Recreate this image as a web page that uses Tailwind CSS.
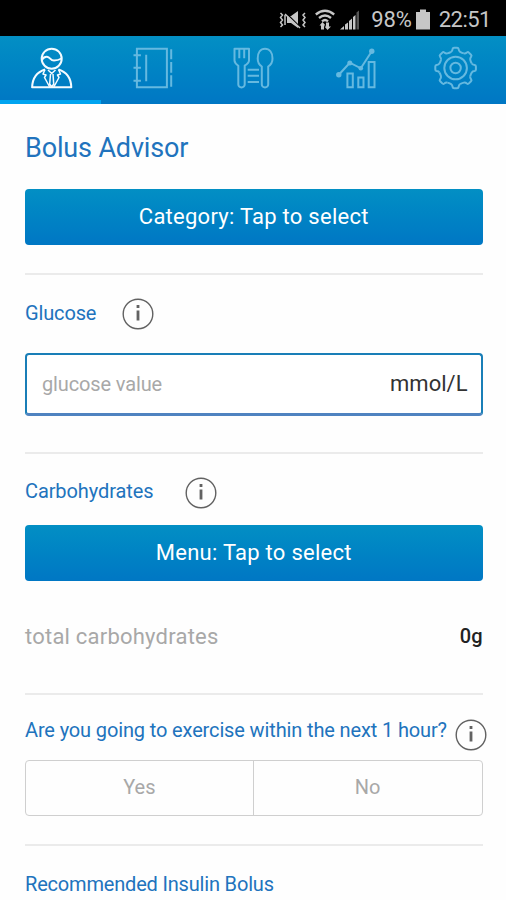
<!DOCTYPE html>
<html lang="en">
<head>
<meta charset="utf-8">
<title>Bolus Advisor</title>
<script src="https://cdn.jsdelivr.net/npm/@tailwindcss/browser@4"></script>
</head>
<body class="w-[506px] h-[900px] overflow-hidden bg-[#fefefe] font-[Roboto,sans-serif] text-[20px]">
<div class="flex h-9 items-center justify-end bg-black pr-[15px] pt-[3px] text-[22px] leading-none text-[#c6c6c6]">
  <svg class="mr-[8px] h-[21px] w-[28px]" viewBox="0 0 28 21" fill="none" stroke="#c6c6c6" stroke-width="1.5">
    <path d="M1.500 4l2 2-2 2.500 2 2.500-2 2.500 2 2.500-2 2M6 6v10M26 4l-2 2 2 2.500-2 2.500 2 2.500-2 2.500 2 2"/>
    <path d="M8 7h4l7-5v17l-7-5H8z" fill="#c6c6c6" stroke="none"/>
    <path d="M7 4l14 14" stroke="#000" stroke-width="1.500"/><path d="M6 5l15 14"/>
  </svg>
  <svg class="mr-[5px] h-[21px] w-[20px]" viewBox="0 0 20 21" fill="none" stroke="#c6c6c6" stroke-width="2.300">
    <path d="M.8 5.500Q10-2 19.200 5.500M4 9Q10 4 16 9M7 12.300Q10 9.800 13 12.300"/>
    <path d="M7.500 13l3 3.500h-1.500V20.500H6v-4H4.500zM12.500 21l-3-3.500h1.500v-4h3v4H16z" fill="#c6c6c6" stroke="none"/>
  </svg>
  <svg class="mr-[11px] h-[21px] w-[20px]" viewBox="0 0 20 21">
    <path d="M0 20.500l4-3.500v3.500zM5 20.500v-5l3-2v7zM9 20.500V12l3-2.500v11zM13 20.500V8l2.500-2v14.500z" fill="#c6c6c6"/><path d="M16.500 20.500V3.500l2.500-2v19z" fill="#555"/>
  </svg>
  <span class="tracking-[-0.1px]">98%</span>
  <svg class="ml-[4px] mr-[9px] h-[21px] w-[14px]" viewBox="0 0 14 21"><path d="M4 .5h6v2.500h4v17.500H0V3h4z" fill="#c6c6c6"/></svg>
  <span class="tracking-[-0.5px]">22:51</span>
</div>

<nav class="grid h-[68px] grid-cols-5 bg-linear-to-b from-[#038fc4] to-[#0077c4]">
  <div class="flex justify-center border-b-4 border-[#00a4f0] pt-[10px]">
    <svg class="size-11 overflow-visible" viewBox="0 0 44 44" fill="none" stroke="#f4fbff" stroke-width="2" stroke-linejoin="round">
      <circle cx="22.700" cy="12.700" r="10"/>
      <path d="M13 13.700Q15 10.500 18 10.700C21.500 11 21 14.500 25 14.500Q29 14.500 32.500 12.500"/>
      <path d="M16 23.500C8 26 3.500 32 3.100 41.300H42.300C42 32 37.500 26 29.500 23.500"/>
      <path d="M16 23.500L14 28l3 1-1.500 2.500L20.700 41M29.500 23.500l2 4.500-3 1 1.500 2.500L24.800 41M19 24l3.700 3.500L26.500 24M21.500 28L20.700 38l2 3 2-3L24 28" stroke-width="1.500"/>
    </svg>
  </div>
  <div class="flex justify-center pt-[10px]">
    <svg class="size-11 overflow-visible" viewBox="0 0 44 44" fill="none" stroke="#65b9e0" stroke-width="2">
      <path d="M6.900 2.700H36.900V41.300H6.900zM16.200 8.700V35.300M3.500 9.300h7.400M3.500 21.700h7.400M3.500 34.700h7.400M41.200 3.300v10M41.200 16v10.700M41.200 29.300v11.400"/>
    </svg>
  </div>
  <div class="flex justify-center pt-[10px]">
    <svg class="size-11 overflow-visible" viewBox="0 0 44 44" fill="none" stroke="#65b9e0" stroke-width="2" stroke-linejoin="round">
      <path d="M3.500 2.700H18V14.500Q18 17 13.700 19.700V38.500a3.200 3 0 0 1-6.400 0V19.700Q3.500 17 3.500 14.500zM8.300 2.700v9.500M13.200 2.700v9.500"/>
      <path d="M30.800 20.500C27.500 18.500 26.700 15.500 26.700 12.500C26.700 6.500 29.500 2.700 34 2.700S41.500 6.500 41.500 12.500C41.500 15.500 40.500 18.500 37.200 20.500V38.500a3.200 3 0 0 1-6.400 0zM16.700 23.700H28M16.700 29.700H28M16.700 36H28"/>
    </svg>
  </div>
  <div class="flex justify-center pt-[10px]">
    <svg class="size-11 overflow-visible" viewBox="0 0 44 44" fill="none" stroke="#65b9e0" stroke-width="2">
      <path d="M6.800 28.700l11-12 11 5.600 11-17M15.400 27.500h5.400v13.800h-5.400zM26.300 31.500h5.200v9.800h-5.200zM36.700 16h5.800v25.300h-5.800z"/>
      <g fill="#65b9e0" stroke="none"><circle cx="6.800" cy="28.700" r="2.700"/><circle cx="17.800" cy="16.900" r="2.500"/><circle cx="28.800" cy="22.300" r="2.300"/><circle cx="39.800" cy="5.300" r="2.700"/></g>
    </svg>
  </div>
  <div class="flex justify-center pt-[10px]">
    <svg class="size-11 overflow-visible" viewBox="0 0 44 44" fill="none" stroke="#65b9e0" stroke-width="2" stroke-linejoin="round">
      <g transform="translate(22.600 22)">
        <path id="tooth" d="M-4.500-16.200Q-3.200-17-3-19Q-2.800-20.300-1.500-20.300H1.500Q2.800-20.300 3-19Q3.200-17 4.500-16.200Q6.500-15 8.270-14.640"/>
        <use href="#tooth" transform="rotate(45)"/><use href="#tooth" transform="rotate(90)"/><use href="#tooth" transform="rotate(135)"/><use href="#tooth" transform="rotate(180)"/><use href="#tooth" transform="rotate(225)"/><use href="#tooth" transform="rotate(270)"/><use href="#tooth" transform="rotate(315)"/>
        <circle r="11.300"/><circle r="5.200"/>
      </g>
    </svg>
  </div>
</nav>

<main class="pl-[25px] pr-[23.500px]">
  <section class="h-[171px] border-b-2 border-[#ebebeb] pt-[26px]">
    <h1 class="h-[59px] text-[27px] leading-[36px] tracking-[-0.15px] text-[#2173bd]">Bolus Advisor</h1>
    <button class="flex h-[56px] w-full items-center justify-center rounded-[4px] bg-linear-to-b from-[#038fc4] to-[#0077c4] pb-[2px] text-[22px] tracking-[0.26px] text-white">Category: Tap to select</button>
  </section>

  <section class="h-[179px] border-b-2 border-[#ebebeb] pt-[22px]">
    <div class="flex h-[56px] gap-[26px] text-[#2173bd]">
      <span class="leading-[32px] tracking-[-0.14px]">Glucose</span>
      <svg class="size-8 mt-px" viewBox="0 0 32 32" fill="none" stroke="#626262" stroke-width="1.400"><circle cx="16" cy="16" r="14.800"/><path d="M16 7v3M16 12.500v10" stroke-width="2.800"/></svg>
    </div>
    <div class="flex h-[63px] items-center justify-between rounded-[4px] border-2 border-b-[3px] border-x-[#197eb7] border-t-[#197eb7] border-b-[#4f83c0] bg-white pl-[15px] pr-[13px]">
      <span class="tracking-[-0.14px] text-[#a8a8a8]">glucose value</span>
      <span class="pb-[2px] text-[22px] text-[#333]">mmol/L</span>
    </div>
  </section>

  <section class="h-[241px] border-b-2 border-[#ebebeb] pt-[21px]">
    <div class="flex h-[50px] gap-[32px] text-[#2173bd]">
      <span class="leading-[32px] tracking-[-0.1px]">Carbohydrates</span>
      <svg class="size-8 mt-[1.500px]" viewBox="0 0 32 32" fill="none" stroke="#626262" stroke-width="1.400"><circle cx="16" cy="16" r="14.800"/><path d="M16 7v3M16 12.500v10" stroke-width="2.800"/></svg>
    </div>
    <button class="flex h-[56px] w-full items-center justify-center rounded-[4px] bg-linear-to-b from-[#038fc4] to-[#0077c4] pb-[2px] text-[22px] tracking-[0.26px] text-white">Menu: Tap to select</button>
    <div class="mt-[39px] flex h-8 items-center justify-between">
      <span class="text-[22px] tracking-[0.22px] text-[#a8a8a8]">total carbohydrates</span>
      <span class="font-medium text-[#222]">0g</span>
    </div>
  </section>

  <section class="h-[151px] border-b-2 border-[#ebebeb] pt-[19px]">
    <div class="-mr-[4px] flex h-[46px] justify-between text-[#2173bd]">
      <span class="whitespace-nowrap leading-[32px] tracking-[-0.135px]">Are you going to exercise within the next 1 hour?</span>
      <svg class="size-8 mt-[4.500px] shrink-0" viewBox="0 0 32 32" fill="none" stroke="#626262" stroke-width="1.400"><circle cx="16" cy="16" r="14.800"/><path d="M16 7v3M16 12.500v10" stroke-width="2.800"/></svg>
    </div>
    <div class="grid h-[56px] grid-cols-2 divide-x divide-[#cfcfcf] rounded-[4px] border-[1.500px] border-[#cfcfcf] text-[#a8a8a8]">
      <button class="pb-[3px]">Yes</button>
      <button class="pb-[3px]">No</button>
    </div>
  </section>

  <h2 class="pt-[22px] leading-[32px] tracking-[-0.18px] text-[#2173bd]">Recommended Insulin Bolus</h2>
</main>
</body>
</html>
